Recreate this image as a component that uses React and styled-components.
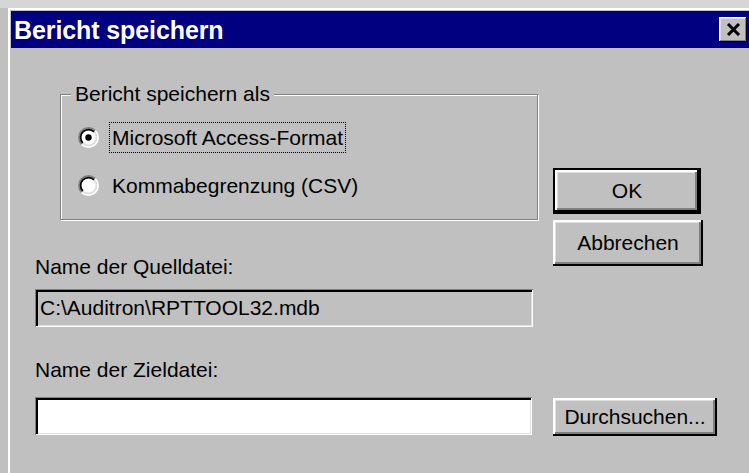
import React from "react";
import styled, { createGlobalStyle } from "styled-components";

const GlobalStyle = createGlobalStyle`
  html, body {
    margin: 0;
    padding: 0;
    background: #c0c0c0;
    overflow: hidden;
  }
  * { box-sizing: border-box; }
`;

const Screen = styled.div`
  width: 749px;
  height: 473px;
  overflow: hidden;
  padding: 8px 0 0 8px;
  background: linear-gradient(#d6d6d6 0 8px, #c0c0c0 8px);
  font-family: "Liberation Sans", Arial, sans-serif;
  font-size: 21px;
  color: #000;
`;

const Window = styled.div`
  height: 100%;
  border-top: 2px solid #fff;
  border-left: 2px solid #fff;
  padding: 1px 0 0 1px;
  background: #c0c0c0;
  display: flex;
  flex-direction: column;
`;

const TitleBar = styled.div`
  height: 37px;
  background: #000080;
  display: flex;
  align-items: center;
  justify-content: space-between;
  padding: 0 2px 0 3px;
`;

const TitleText = styled.span`
  color: #fff;
  font-weight: bold;
  font-size: 25px;
  line-height: 28px;
  letter-spacing: -0.1px;
`;

const CloseButton = styled.button`
  width: 28px;
  height: 25px;
  padding: 0;
  border: none;
  background: #c0c0c0;
  display: flex;
  align-items: center;
  justify-content: center;
  box-shadow: inset -1px -1px #000, inset 1px 1px #fff,
    inset -2px -2px #808080, inset 2px 2px #dfdfdf;
`;

const Body = styled.div`
  display: grid;
  grid-template-columns: 502px 165px;
  column-gap: 16px;
  padding: 36px 0 0 24px;
  align-items: start;
`;

const Group = styled.fieldset`
  grid-column: 1;
  grid-row: 1;
  margin: 0 0 0 25px;
  width: 478px;
  padding: 0 0 18px 10px;
  border: 1px solid #808080;
  box-shadow: inset 1px 1px #fff, 1px 1px #fff;
  min-width: 0;
`;

const GroupLegend = styled.legend`
  padding: 0 4px;
  line-height: 20px;
  background: #c0c0c0;
`;

const RadioList = styled.div`
  display: flex;
  flex-direction: column;
  gap: 17px;
  padding-top: 18px;
`;

const RadioRow = styled.label`
  display: flex;
  align-items: center;
  gap: 10px;
  margin-left: 7px;
`;

const RadioLabel = styled.span`
  line-height: 24px;
  padding: 3px 2px 2px;
  border: 1px ${(p) => (p.$focused ? "dotted #000" : "solid transparent")};
`;

const ButtonStack = styled.div`
  grid-column: 2;
  grid-row: 1 / span 2;
  margin-top: 84px;
  display: flex;
  flex-direction: column;
  gap: 6px;
`;

const PushButton = styled.button`
  width: ${(p) => p.$width || 148}px;
  height: ${(p) => p.$height || 46}px;
  padding: 0;
  font-family: inherit;
  font-size: 21px;
  color: #000;
  background: #c0c0c0;
  border: ${(p) => (p.$default ? "2px solid #000" : "none")};
  box-shadow: inset -2px -2px #000, inset 2px 2px #fff,
    inset -4px -4px #808080, inset 3px 3px #dfdfdf;
`;

const FieldLabel = styled.div`
  grid-column: 1;
  grid-row: ${(p) => p.$row};
  margin-top: ${(p) => p.$gap}px;
  line-height: 24px;
`;

const TextField = styled.div`
  grid-column: 1;
  grid-row: ${(p) => p.$row};
  margin-top: ${(p) => p.$gap}px;
  width: ${(p) => p.$width}px;
  height: 38px;
  display: flex;
  align-items: center;
  padding-left: 5px;
  background: ${(p) => (p.$disabled ? "#c0c0c0" : "#fff")};
  box-shadow: inset 1px 1px #808080, inset -1px -1px #fff,
    inset 3px 3px #000, inset -2px -2px #dfdfdf;
`;

const BrowseCell = styled.div`
  grid-column: 2;
  grid-row: 5;
  margin-top: 16px;
`;

function RadioMark({ checked }) {
  const c = 10.5;
  const arc = (r, first) => {
    const d = r * 0.7071;
    return first
      ? `M ${c - d} ${c + d} A ${r} ${r} 0 0 1 ${c + d} ${c - d}`
      : `M ${c + d} ${c - d} A ${r} ${r} 0 0 1 ${c - d} ${c + d}`;
  };
  return (
    <svg width="21" height="21" viewBox="0 0 21 21">
      <circle cx={c} cy={c} r="8.5" fill="#fff" />
      <path d={arc(9.6, true)} stroke="#808080" strokeWidth="1.8" fill="none" />
      <path d={arc(9.6, false)} stroke="#fff" strokeWidth="1.8" fill="none" />
      <path d={arc(7.9, true)} stroke="#000" strokeWidth="1.8" fill="none" />
      <path d={arc(7.9, false)} stroke="#dfdfdf" strokeWidth="1.8" fill="none" />
      {checked && <circle cx={c} cy={c} r="3.2" fill="#000" />}
    </svg>
  );
}

function CloseGlyph() {
  return (
    <svg width="15" height="13" viewBox="0 0 15 13">
      <path d="M2 1 L13 12 M13 1 L2 12" stroke="#000" strokeWidth="3" />
    </svg>
  );
}

export default function App() {
  return (
    <>
      <GlobalStyle />
      <Screen>
        <Window>
          <TitleBar>
            <TitleText>Bericht speichern</TitleText>
            <CloseButton aria-label="Schließen">
              <CloseGlyph />
            </CloseButton>
          </TitleBar>
          <Body>
            <Group>
              <GroupLegend>Bericht speichern als</GroupLegend>
              <RadioList>
                <RadioRow>
                  <RadioMark checked />
                  <RadioLabel $focused>Microsoft Access-Format</RadioLabel>
                </RadioRow>
                <RadioRow>
                  <RadioMark />
                  <RadioLabel>Kommabegrenzung (CSV)</RadioLabel>
                </RadioRow>
              </RadioList>
            </Group>
            <ButtonStack>
              <PushButton $default>OK</PushButton>
              <PushButton $width={150}>Abbrechen</PushButton>
            </ButtonStack>
            <FieldLabel $row={2} $gap={35}>Name der Quelldatei:</FieldLabel>
            <TextField $row={3} $gap={10} $width={498} $disabled>
              C:\Auditron\RPTTOOL32.mdb
            </TextField>
            <FieldLabel $row={4} $gap={31}>Name der Zieldatei:</FieldLabel>
            <TextField $row={5} $gap={15} $width={497} />
            <BrowseCell>
              <PushButton $width={164} $height={38}>Durchsuchen...</PushButton>
            </BrowseCell>
          </Body>
        </Window>
      </Screen>
    </>
  );
}
